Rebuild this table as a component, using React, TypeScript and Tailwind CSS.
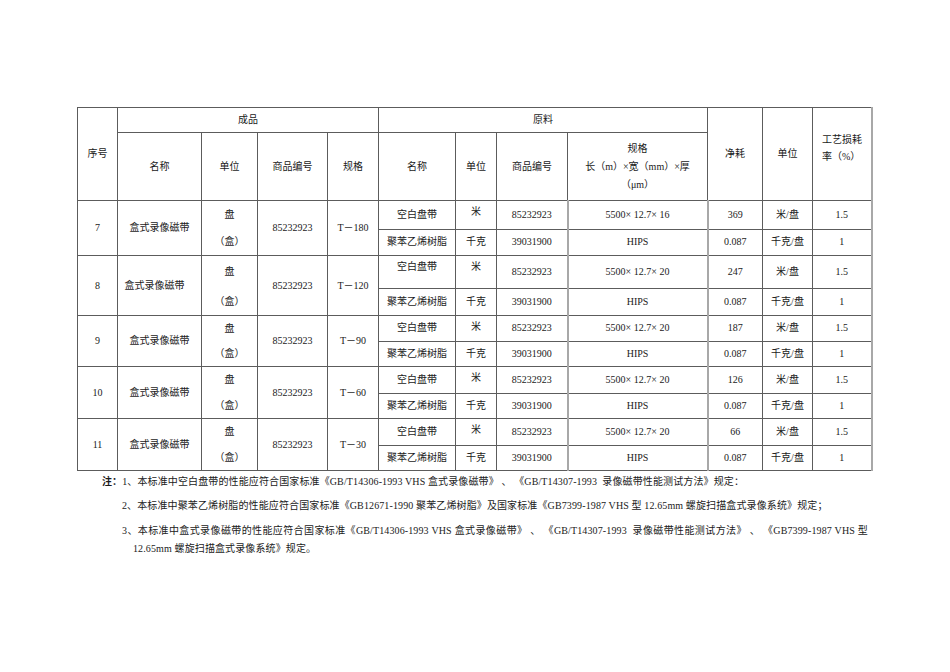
import React from "react";

type Group = {
  no: string;
  spec: string;
  tape: string;
  net: string;
  top: number;
  bottom: number;
  nameShift?: boolean;
};

const groups: Group[] = [
  { no: "7", spec: "T－180", tape: "5500× 12.7× 16", net: "369", top: 28, bottom: 26 },
  { no: "8", spec: "T－120", tape: "5500× 12.7× 20", net: "247", top: 32, bottom: 27, nameShift: true },
  { no: "9", spec: "T－90", tape: "5500× 12.7× 20", net: "187", top: 25, bottom: 25 },
  { no: "10", spec: "T－60", tape: "5500× 12.7× 20", net: "126", top: 26, bottom: 25 },
  { no: "11", spec: "T－30", tape: "5500× 12.7× 20", net: "66", top: 26, bottom: 25 },
];

const cell = "border border-[#5c5c5c] text-center align-middle p-0";

export default function App() {
  return (
    <div
      className="min-h-[672px] w-[950px] bg-white pt-[107px] text-[10px] text-[#1a1a1a]"
      style={{ fontFamily: '"Liberation Serif", "Noto Sans CJK SC", serif' }}
    >
      <table className="ml-[77px] w-[794px] table-fixed border-collapse leading-none">
        <colgroup>
          <col className="w-[40px]" />
          <col className="w-[84px]" />
          <col className="w-[56px]" />
          <col className="w-[70px]" />
          <col className="w-[51px]" />
          <col className="w-[77px]" />
          <col className="w-[41px]" />
          <col className="w-[71px]" />
          <col className="w-[140px]" />
          <col className="w-[55px]" />
          <col className="w-[50px]" />
          <col className="w-[59px]" />
        </colgroup>
        <tbody>
          <tr className="h-[25px]">
            <td rowSpan={2} className={cell}>序号</td>
            <td colSpan={4} className={cell}>成品</td>
            <td colSpan={4} className={cell}>原料</td>
            <td rowSpan={2} className={cell}>净耗</td>
            <td rowSpan={2} className={cell}>单位</td>
            <td rowSpan={2} className={`${cell} border-r-[#a8a8a8] border-r-2`}>
              <div className="pb-[12px] pl-[9px] text-left leading-[17px]">
                <div>工艺损耗</div>
                <div>率（%）</div>
              </div>
            </td>
          </tr>
          <tr className="h-[68px]">
            <td className={cell}>名称</td>
            <td className={cell}>单位</td>
            <td className={cell}>商品编号</td>
            <td className={cell}>规格</td>
            <td className={cell}>名称</td>
            <td className={cell}>单位</td>
            <td className={cell}>商品编号</td>
            <td className={cell}>
              <div className="leading-[18px]">
                <div>规格</div>
                <div>长（m）×宽（mm）×厚</div>
                <div>（μm）</div>
              </div>
            </td>
          </tr>
          {groups.map((g) => (
            <React.Fragment key={g.no}>
              <tr style={{ height: g.top }}>
                <td rowSpan={2} className={cell}>{g.no}</td>
                <td rowSpan={2} className={cell}>
                  <span className={g.nameShift ? "relative -left-[5px]" : ""}>盒式录像磁带</span>
                </td>
                <td rowSpan={2} className={cell}>
                  <div style={{ lineHeight: `${g.top}px` }}>盘</div>
                  <div style={{ lineHeight: `${g.bottom}px` }}>（盒）</div>
                </td>
                <td rowSpan={2} className={cell}>85232923</td>
                <td rowSpan={2} className={cell}>{g.spec}</td>
                <td className={`${cell} ${g.nameShift ? "align-top pt-[6px]" : ""}`}>空白盘带</td>
                <td className={`${cell} align-top pt-[6px]`}>米</td>
                <td className={cell}>85232923</td>
                <td className={`${cell} border-l-[#a8a8a8] border-l-2`}>{g.tape}</td>
                <td className={`${cell} border-l-[#a8a8a8] border-l-2`}>{g.net}</td>
                <td className={cell}>米/盘</td>
                <td className={`${cell} border-r-[#a8a8a8] border-r-2`}>1.5</td>
              </tr>
              <tr style={{ height: g.bottom }}>
                <td className={cell}>聚苯乙烯树脂</td>
                <td className={cell}>千克</td>
                <td className={cell}>39031900</td>
                <td className={`${cell} border-l-[#a8a8a8] border-l-2`}>HIPS</td>
                <td className={`${cell} border-l-[#a8a8a8] border-l-2`}>0.087</td>
                <td className={cell}>千克/盘</td>
                <td className={`${cell} border-r-[#a8a8a8] border-r-2`}>1</td>
              </tr>
            </React.Fragment>
          ))}
        </tbody>
      </table>

      <div className="-mt-[1px] ml-[102px] w-[770px] leading-[24px] tracking-[0.12px]">
        <div>
          <span className="font-bold">注：</span>1、本标准中空白盘带的性能应符合国家标准《GB/T14306-1993 VHS 盒式录像磁带》 、 《GB/T14307-1993&nbsp;&nbsp;录像磁带性能测试方法》规定：
        </div>
        <div className="pl-[20px]">
          2、本标准中聚苯乙烯树脂的性能应符合国家标准《GB12671-1990 聚苯乙烯树脂》及国家标准《GB7399-1987 VHS 型 12.65mm 螺旋扫描盒式录像系统》规定；
        </div>
        <div className="ml-[20px] mt-[4px] w-[746px] leading-[18px]">
          <div className="text-justify [text-align-last:justify]">
            3、本标准中盒式录像磁带的性能应符合国家标准《GB/T14306-1993 VHS 盒式录像磁带》 、 《GB/T14307-1993&nbsp;&nbsp;录像磁带性能测试方法》 、 《GB7399-1987 VHS 型
          </div>
          <div className="pl-[11px]">12.65mm 螺旋扫描盒式录像系统》规定。</div>
        </div>
      </div>
    </div>
  );
}
